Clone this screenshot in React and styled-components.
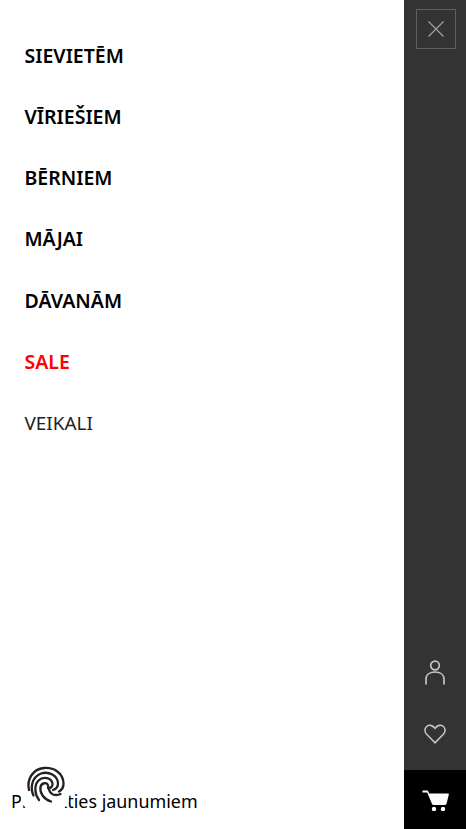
import React from "react";
import styled, { createGlobalStyle } from "styled-components";

const Global = createGlobalStyle`
  html, body { margin: 0; padding: 0; background: #fff; }
  body { font-family: "Noto Sans", "Open Sans", sans-serif; }
`;
const Page = styled.div`
  display: flex;
  width: 466px;
  height: 829px;
  overflow: hidden;
  position: relative;
`;
const Main = styled.main`
  flex: 1;
  display: flex;
  flex-direction: column;
  justify-content: space-between;
  min-width: 0;
`;
const Menu = styled.nav`
  display: flex;
  flex-direction: column;
  padding: 24.8px 0 0 24.5px;
`;
const MenuItem = styled.a`
  display: block;
  height: 61.2px;
  line-height: 61.2px;
  margin-top: ${(p) => (p.$light ? "1px" : "0")};
  font-size: ${(p) => (p.$light ? "18.9px" : "19.5px")};
  font-weight: ${(p) => (p.$light ? 400 : 600)};
  color: ${(p) => (p.$red ? "#ff0000" : p.$light ? "#222" : "#000")};
`;
const Subscribe = styled.div`
  padding: 0 0 16px 11px;
  font-size: 17.9px;
  line-height: 24px;
  color: #000;
`;
const Side = styled.aside`
  width: 62px;
  background: #333333;
  display: flex;
  flex-direction: column;
  align-items: center;
`;
const Close = styled.button`
  width: 40px;
  height: 40px;
  margin: 9px 0 0 2px;
  padding: 0;
  background: transparent;
  border: 1px solid #5f5f5f;
  display: flex;
  align-items: center;
  justify-content: center;
`;
const Spacer = styled.div`
  flex: 1;
`;
const IconGroup = styled.div`
  display: flex;
  flex-direction: column;
  padding-bottom: 5px;
`;
const SideButton = styled.div`
  width: 62px;
  height: ${(p) => p.$h}px;
  display: flex;
  align-items: center;
  justify-content: center;
  background: ${(p) => (p.$dark ? "#000" : "transparent")};
`;
const Fingerprint = styled.div`
  position: absolute;
  left: 21px;
  top: 762px;
  width: 48px;
  height: 48px;
  border-radius: 12px;
  background: #fff;
  svg {
    display: block;
    margin-left: 1px;
  }
`;

export default function App() {
  return (
    <Page>
      <Global />
      <Main>
        <Menu>
          <MenuItem>SIEVIETĒM</MenuItem>
          <MenuItem>VĪRIEŠIEM</MenuItem>
          <MenuItem>BĒRNIEM</MenuItem>
          <MenuItem>MĀJAI</MenuItem>
          <MenuItem>DĀVANĀM</MenuItem>
          <MenuItem $red>SALE</MenuItem>
          <MenuItem $light>VEIKALI</MenuItem>
        </Menu>
        <Subscribe>Pieteikties jaunumiem</Subscribe>
      </Main>
      <Side>
        <Close aria-label="close">
          <svg width="18" height="18" viewBox="0 0 18 18" fill="none" stroke="#a5a5a5" strokeWidth="1.1">
            <path d="M1.5 1.5 L16.5 16.5 M16.5 1.5 L1.5 16.5" />
          </svg>
        </Close>
        <Spacer />
        <IconGroup>
          <SideButton $h={62}>
            <svg width="20" height="25" viewBox="0 0 20 25" fill="none" stroke="#c4c4c4" strokeWidth="1.7">
              <circle cx="10" cy="5.5" r="4.3" />
              <path d="M1 24.5 V19 C1 14.5 5 12 10 12 C15 12 19 14.5 19 19 V24.5" />
            </svg>
          </SideButton>
          <SideButton $h={62}>
            <svg width="22" height="20" viewBox="0 0 22 20" fill="none" stroke="#c4c4c4" strokeWidth="1.6">
              <path d="M11 18.8 L2.4 10 C0.3 7.8 0.5 4.4 2.6 2.5 C4.9 0.5 8.6 0.9 11 4.4 C13.4 0.9 17.1 0.5 19.4 2.5 C21.5 4.4 21.7 7.8 19.6 10 Z" />
            </svg>
          </SideButton>
        </IconGroup>
        <SideButton $h={59} $dark>
          <svg width="27" height="22" viewBox="0 0 27 22" fill="#fff">
            <path d="M0.5 1.6 H5 C5.7 1.6 6.2 2 6.4 2.6 L7 4.6 H26 C26.7 4.6 27 5.1 26.8 5.7 L24.6 14.6 C24.4 15.5 23.8 16 23 16 H11.5 C10.7 16 10.2 15.6 10 14.9 L5.2 3.4 H0.5 Z" />
            <circle cx="12" cy="20" r="2.2" />
            <circle cx="21" cy="20" r="2.2" />
          </svg>
        </SideButton>
      </Side>
      <Fingerprint>
        <svg width="48" height="48" viewBox="0 0 48 48" fill="none" stroke="#222" strokeWidth="2.3" strokeLinecap="round">
          <path d="M7 28 C4.5 17 11 7 22 6 C32 5.2 41 11 41.5 21 C41.8 25 39.5 28 37 29.5" />
          <path d="M11.5 33.5 C8 26 9.5 15.5 19 11.5 C27 9 35.5 13.5 36 21 C36.2 25 34 27 31 28" />
          <path d="M17 38 C12.5 32 12 23 16.5 18.5 C21 14 29.5 15.5 30.5 21.5 C31 25 28 26.5 26 26" />
          <path d="M29 39.5 C22 37.5 17.5 31 18.5 25 C19.5 20.5 25 20 26 23.5 C26.5 27 27.5 31 31 32.5 C33.5 33.2 36.5 33 38.5 32" />
        </svg>
      </Fingerprint>
    </Page>
  );
}
